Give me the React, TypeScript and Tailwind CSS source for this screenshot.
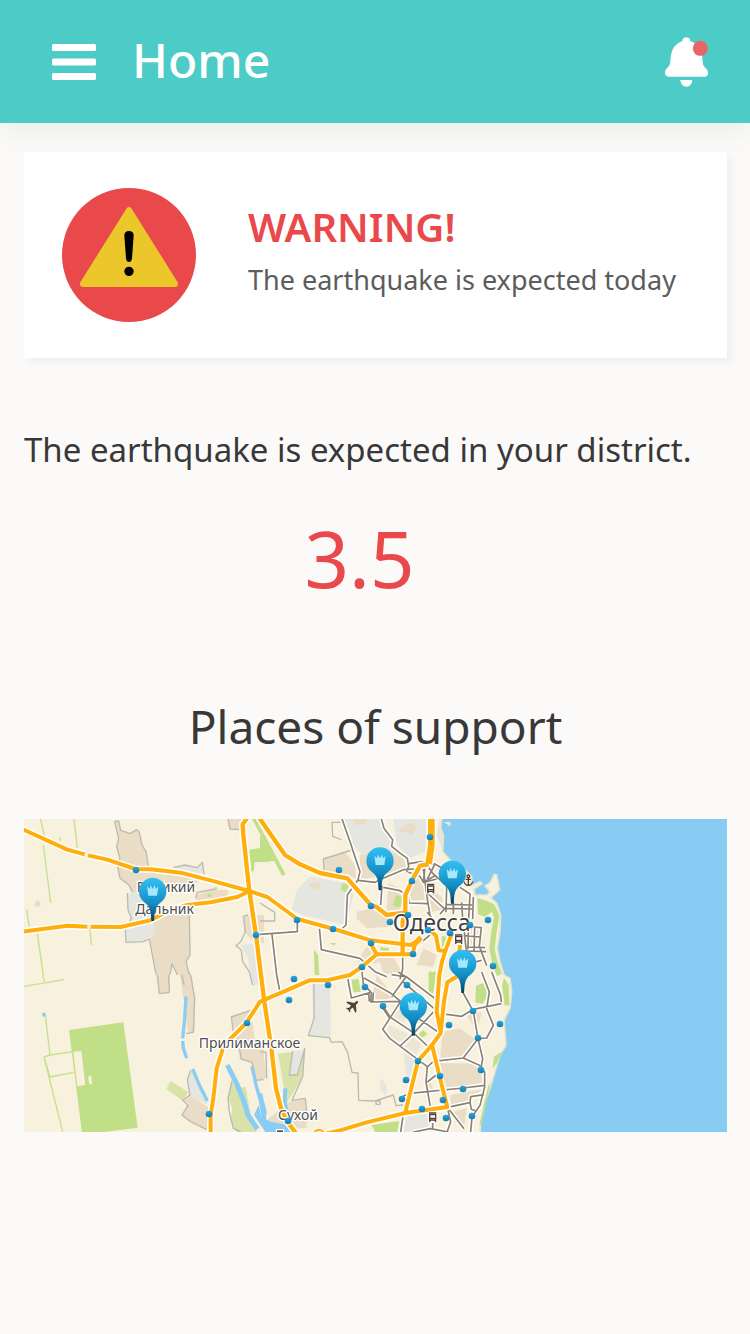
type Tile = "nw" | "sw" | "n" | "s" | "ne" | "cityN" | "cityS";
type Shape = { t: Tile; d: string; c?: string; w?: number };

// Map units are thirds of a pixel; every tile has its own local origin.
const tileOrigin: Record<Tile, [number, number]> = {
  nw: [0, 0],
  sw: [0, 480],
  n: [708, 0],
  s: [708, 480],
  ne: [1128, 0],
  cityN: [948, 12],
  cityS: [948, 471],
};

const SAND = "#eaddc5";
const GREY = "#e6e6e0";
const GREEN = "#c1df87";
const OLIVE = "#d9e3a8";
const WATER = "#89cdf4";
const PALE = "#f7f1de";

const areas: Shape[] = [
  { t: "nw", c: SAND, d: "M274 16 L284 18 L290 46 L318 56 L338 44 L346 52 L354 90 L366 110 L374 156 L420 170 L420 215 L410 240 L325 240 L315 210 L288 190 L280 150 L288 130 L278 95 L284 70Z" },
  { t: "nw", c: GREY, d: "M310 235 L345 230 L388 310 L394 352 L358 380 L306 382 L304 345 L322 310 L312 285Z" },
  { t: "nw", c: SAND, d: "M385 312 L430 290 L496 300 L498 420 L486 440 L496 480 L460 480 L444 446 L438 480 L396 480 L376 372 L394 352Z" },
  { t: "nw", c: SAND, d: "M396 470 L438 470 L438 532 L406 536Z M466 470 L500 470 L512 540 L512 650 L492 656 L480 560Z" },
  { t: "nw", c: SAND, d: "M418 180 L470 178 L530 195 L500 215 L430 215Z M515 240 L560 225 L612 225 L610 245 L520 262Z M612 12 L660 12 L650 44 L618 42Z M660 304 L720 300 L720 385 L690 380 L660 350Z" },
  { t: "nw", c: GREEN, d: "M550 236 L562 236 L562 246 L550 246Z M570 216 L582 218 L578 224Z" },
  { t: "nw", c: GREY, d: "M450 158 L482 150 L520 158 L535 142 L538 175 L480 170Z M650 390 L690 385 L705 480 L710 510 L686 510 L672 430Z" },
  { t: "nw", c: GREEN, d: "M676 104 L740 94 L752 122 L738 140 L692 142 L690 168 L682 170Z" },
  { t: "nw", c: SAND, d: "M30 268 L40 256 L50 262 L48 274 L36 276Z" },
  { t: "nw", c: GREEN, d: "M684 12 L696 12 L785 178 L774 182Z" },
  { t: "sw", c: GREEN, d: "M135 165 L298 142 L341 458 L210 475 L174 475Z" },
  { t: "sw", c: PALE, d: "M148 230 L172 228 L184 330 L160 334Z M192 304 L202 304 L205 328 L196 328Z" },
  { t: "sw", c: SAND, d: "M622 124 L680 106 L692 190 L720 200 L720 316 L696 316 L684 262 L648 254 L640 210Z" },
  { t: "sw", c: OLIVE, d: "M440 318 L494 352 L474 376 L427 342Z" },
  { t: "sw", c: GREY, d: "M500 286 L552 372 L548 388 L496 362 L490 320Z" },
  { t: "sw", c: SAND, d: "M496 360 L552 396 L552 466 L500 440 L474 420 L492 385 L476 375Z" },
  { t: "sw", c: OLIVE, d: "M624 318 L640 340 L665 335 L680 420 L700 475 L640 475 L620 440 L625 400 L612 370Z" },
  { t: "n", c: GREY, d: "M248 12 L370 12 L385 60 L400 105 L425 125 L300 115 L265 70Z M150 185 L262 205 L280 240 L258 330 L130 300 L95 285 L110 225Z M400 12 L500 12 L496 110 L450 130 L410 90Z M540 12 L560 60 L545 100 L530 60Z" },
  { t: "n", c: SAND, d: "M190 130 L255 112 L285 150 L288 190 L230 175 L192 165Z M300 120 L370 98 L430 130 L440 165 L300 195Z M412 50 L450 22 L472 35 L455 64 L440 50Z M145 212 L162 200 L185 210 L175 226Z M290 290 L340 280 L395 310 L385 335 L320 340 L290 310Z M275 12 L315 12 L320 28 L285 30Z" },
  { t: "n", c: SAND, d: "M385 205 L430 225 L420 285 L380 290Z M455 170 L488 180 L495 255 L450 255Z M500 210 L548 250 L545 285 L515 290Z M290 440 L320 395 L380 410 L395 435 L345 445Z M360 440 L400 425 L425 470 L370 478Z M630 340 L665 340 L670 400 L630 400Z M490 400 L530 420 L520 455 L470 450Z" },
  { t: "n", c: GREEN, d: "M0 60 L30 110 L45 138 L0 138Z M248 204 L266 210 L258 232 L240 224Z M408 240 L428 246 L422 276 L398 272Z M162 402 L174 420 L178 480 L164 480Z M360 396 L388 400 L384 410 L362 406Z M506 470 L528 470 L520 535 L506 535Z M210 384 L228 384 L222 392Z M545 362 L560 366 L552 400 L546 396Z" },
  { t: "s", c: GREY, d: "M155 20 L210 18 L212 186 L145 182 L162 130Z M98 228 L130 224 L110 300 L90 300Z M362 310 L380 330 L380 360 L360 345Z M430 215 L480 250 L465 340 L440 320Z M445 405 L500 400 L505 470 L430 470Z" },
  { t: "s", c: OLIVE, d: "M54 236 L98 230 L88 300 L112 300 L134 220 L128 305 L80 385Z" },
  { t: "s", c: SAND, d: "M0 230 L10 230 L20 310 L0 316Z M14 440 L90 380 L134 370 L140 435 L140 460 L100 460Z M548 170 L600 160 L655 200 L620 250 L540 255Z M530 265 L655 265 L670 330 L560 345Z M500 290 L520 345 L508 350Z M570 360 L670 342 L625 375 L575 395Z M350 0 L400 60 L380 76 L335 74Z M580 410 L620 400 L612 460 L590 440Z M620 120 L665 112 L650 170Z" },
  { t: "s", c: "#ece7d5", d: "M400 90 L445 115 L425 155 L395 130Z M385 150 L450 180 L425 205 L385 185Z M455 185 L485 205 L470 240 L430 215Z" },
  { t: "s", c: GREEN, d: "M274 14 L296 12 L302 50 L280 52Z M475 178 L490 165 L502 178 L484 190Z M652 30 L680 38 L676 75 L650 85Z M335 450 L418 438 L412 471 L345 471Z" },
];

const seaPath =
  "M125 12 L122 40 L130 60 L128 110 L150 135 L195 165 L215 185 L215 212 L240 200 L246 206 L222 222 L225 240 L262 240 L270 230 L255 212 L270 204 L283 178 L290 180 L299 225 L272 248 L290 265 L302 300 L300 350 L292 400 L300 440 L312 480 L330 490 L335 530 L330 580 L312 615 L318 690 L300 720 L285 770 L270 820 L255 860 L242 920 L240 960 L1000 960 L1000 0 L125 0 Z";

const boundaries: Shape[] = [
  { t: "nw", d: "M325 230 L315 210 L288 190 L280 150 L288 130 L278 95 L284 70 L272 20 L284 18 L290 46 L318 56 L338 44 L346 52 L354 90 L366 110 L374 156 M310 235 L312 285 L322 310 L304 345 L306 382 L358 380 L376 372 L396 478 M448 158 L482 150 L520 158 L535 142 L540 178 M515 250 L520 232 L575 222 M496 300 L498 420 L486 440 L496 480 M438 480 L444 446 L460 480 M612 12 L618 42 L650 44 M672 300 L658 304 L664 350 L650 380 L636 392 L652 405 L656 440 L676 470 L686 510" },
  { t: "sw", d: "M400 0 L406 56 L436 52 L434 0 M474 0 L480 30 M500 0 L512 70 L508 172 L486 176 M680 106 L622 126 L628 170 L642 195 L652 252 L684 262 L696 316 L718 314 M500 286 L490 315 L498 360 L476 375 L492 392 L474 420 L500 440 L548 464 M624 318 L612 370 L616 410 L628 460 L650 470" },
  { t: "n", d: "M250 22 L216 22 L218 64 L244 74 M285 102 L190 132 L192 166 M0 264 L44 292 L44 318 L0 318" },
  { t: "s", d: "M162 20 L162 130 L145 182 L208 188 L214 202 L246 200 L262 230 L276 292 L294 294 L296 376 L345 378 L400 360 L408 392 L430 390 M348 378 H360 V388 H348Z M98 228 L88 300 L112 300 L134 220 L128 305 L96 376 L136 370 L142 438 M0 230 L18 232 L20 310" },
];

const streams: Shape[] = [
  { t: "sw", w: 10, d: "M486 64 L482 130 L476 190 M476 198 L478 220 L488 250 M506 282 L526 330 L550 378" },
  { t: "sw", w: 15, d: "M610 270 L640 330 L660 380 L672 420 L700 462" },
  { t: "sw", w: 10, d: "M684 274 L696 330 L710 380 L720 440" },
  { t: "s", w: 12, d: "M0 355 L14 410 L10 450 M76 340 L74 380 L84 430" },
  { t: "sw", w: 10, d: "M58 114 L62 124" },
];

const greenLines: Shape[] = [
  { t: "nw", w: 4, d: "M50 12 L64 80 M58 90 L80 264 M150 12 L160 100 M106 66 L110 78 M8 284 L16 334 M40 356 L58 480 M198 340 L202 390" },
  { t: "sw", w: 4, d: "M0 34 L120 14 M56 0 L62 20 M64 120 L78 240 L146 230 M60 246 L78 306 L148 292 M60 246 L116 470 M78 240 L60 246" },
];

const streets: Shape[] = [
  { t: "n", w: 5, d: "M246 12 L270 80 L300 170 L294 194 L262 240 L258 330 L245 342 M0 358 L112 350 L112 314 M36 358 L50 480 M178 336 L184 404 L300 430 L345 470 L380 485" },
  { t: "cityN", w: 5, d: "M124 0 L132 28 L158 62 L155 82 L182 104 L202 118 L206 142 L200 160 M54 184 L105 190 L130 178 L190 152 L225 150 M130 205 L180 215 L205 235 L207 252 L262 254 M126 200 L122 258 M206 134 L245 128 L285 135 L315 152 M205 160 L240 172 L250 190 L290 180 M250 150 L262 240 L270 290 M262 140 L280 165 L320 200 L318 280 M255 140 L250 190 L285 170 M285 135 L262 180 M265 225 L312 268 M300 285 L318 265 M282 305 L262 280 M318 256 L396 258 M318 268 L396 270 M360 205 L390 225 L386 300 M400 234 L398 300 M340 250 V285 M365 250 L368 300" },
  { t: "cityN", w: 5, d: "M188 400 V450 L180 480 M220 390 L282 338 M372 330 L378 388 L400 450 M400 324 L424 326 L418 382 L440 440 M370 350 L420 354 M375 384 L435 386 M375 396 L438 398 M385 330 L384 390 M404 326 L402 400 M400 430 L425 424" },
  { t: "cityS", w: 5, d: "M22 12 L34 78 L90 62 M66 0 L70 35 L94 62 L92 90 L180 88 M86 62 L88 88 M100 62 L98 88 M72 18 L150 62 L182 88 L155 130 L128 172 L150 200 L262 284 M130 103 L150 135 L220 182 L262 222 M180 88 L220 125 M180 222 L220 185 L280 120 M225 132 L300 184 M150 140 L130 110 M155 8 L200 15 L285 80 M200 12 L155 74 M190 30 L285 112 M175 0 L210 22" },
  { t: "cityS", w: 5, d: "M282 122 L365 133 L400 112 L484 95 M368 60 L400 118 L414 200 L428 260 L422 295 M425 0 L448 60 L440 110 L460 160 L440 198 L414 200 L370 258 L280 268 L262 285 L258 330 L272 410 M370 258 L418 280 L434 300 V345 L420 400 L396 435 L392 480 M182 376 L210 364 L370 348 L434 340 M322 406 L390 392 L392 374 L432 368 M322 406 L372 470 M390 392 L394 412 L410 418 M322 406 L332 450 L322 478 M220 480 L272 470 L325 480 M278 450 V474 M190 425 L182 480 M455 0 L482 70 L484 90 M262 330 L300 300" },
  { t: "s", w: 5, d: "M50 0 L60 52" },
];

const highways: Shape[] = [
  { t: "nw", w: 12, d: "M-10 40 L130 104 L182 118 M192 121 L250 134 L334 162 L380 163 L470 173 L560 196 L676 228 L730 246 L820 312 L930 342 L1040 376 L1160 390 L1176 380 L1190 366" },
  { t: "nw", w: 12, d: "M-10 351 L130 332 L190 335 M200 335 L290 336 L378 316 L430 290 L490 270 L560 262 L640 246 L676 228" },
  { t: "nw", w: 13, d: "M676 0 L656 28 L658 60 L676 228 L696 360 L720 552 L742 700 L756 820 L770 876 L790 920 L820 960" },
  { t: "n", w: 13, d: "M-4 0 L0 12 L75 120 L120 148 L180 174 L262 190 L332 270 L350 276 L380 300 L410 296 L440 292" },
  { t: "n", w: 20, d: "M514 0 L514 90 L506 146" },
  { t: "n", w: 13, d: "M506 148 L480 152 L456 196 L436 240 L436 290 L428 320 L428 420" },
  { t: "n", w: 12, d: "M332 386 L350 418 L458 418 L464 390 L484 370 M350 418 L305 456 L270 480 L200 496 L148 496 L80 526 L0 560 L-42 625 L-108 690 L-130 760 L-140 850 L-148 900 L-148 960" },
  { t: "n", w: 12, d: "M510 346 L528 362 L536 406 L556 408 L570 370 L576 354 M556 408 L546 440 L538 480 L530 590 L542 650 M600 390 L594 450 M592 484 L562 502 L552 560 L542 654 L516 690 L474 738 L436 892 M516 690 L540 790 L562 876 L436 894 L320 922 L240 946 L180 960" },
];

const dots: [number, number][] = [
  [136, 870], [256, 935], [247, 1023], [209, 1114], [339, 870], [297, 920], [333, 929],
  [371, 906], [390, 922], [371, 943], [413, 954], [362, 967], [412, 881], [430, 837],
  [408, 915], [428, 930], [450, 933], [470, 925], [488, 920], [493, 966], [294, 979],
  [289, 1000], [328, 985], [365, 987], [383, 1006], [407, 985], [473, 1011], [449, 1025],
  [500, 1024], [478, 1038], [418, 1061], [481, 1070], [406, 1080], [440, 1076],
  [463, 1089], [402, 1099], [422, 1109], [443, 1100], [446, 1118], [472, 1116], [288, 1121],
];

const pins: [number, number][] = [
  [386, 318], [1068, 226], [1285, 266], [1316, 534], [1168, 662],
];

const tileShift = (t: Tile) => `translate(${tileOrigin[t][0]} ${tileOrigin[t][1]})`;

function Lines({ items, color, extra = 0 }: { items: Shape[]; color: string; extra?: number }) {
  return (
    <g fill="none" stroke={color} strokeLinejoin="round">
      {items.map((s, i) => (
        <path key={i} d={s.d} strokeWidth={(s.w ?? 4) + extra} transform={tileShift(s.t)} />
      ))}
    </g>
  );
}

function Tram({ x, y }: { x: number; y: number }) {
  return (
    <g transform={`translate(${x} ${y})`} fill="none" stroke="#563f39" strokeWidth="4">
      <rect x="-14" y="-17" width="28" height="34" fill="#fff" stroke="none" />
      <path d="M-11 -13 H11 M-9 -8 H9 V8 H-9 Z M-9 3 H9 M-6 8 L-10 14 M6 8 L10 14" />
    </g>
  );
}

function SupportMap() {
  return (
    <svg
      viewBox="0 12 2109 939"
      className="block h-auto w-full"
      role="img"
      aria-label="Places of support"
    >
      <defs>
        <linearGradient id="pin" x1="0" y1="0" x2="0" y2="1">
          <stop offset="0" stopColor="#32c0f2" />
          <stop offset="0.6" stopColor="#138cc4" />
          <stop offset="1" stopColor="#073c5e" />
        </linearGradient>
        <linearGradient id="dot" x1="0" y1="0" x2="0" y2="1">
          <stop offset="0" stopColor="#2aa8dc" />
          <stop offset="1" stopColor="#1579b0" />
        </linearGradient>
      </defs>
      <rect y="12" width="2109" height="939" fill={PALE} />
      {areas.map((s, i) => (
        <path key={i} d={s.d} fill={s.c} transform={tileShift(s.t)} />
      ))}
      <Lines items={greenLines} color="#c5e08c" />
      <Lines items={boundaries} color="#bdb9b3" />
      <g transform={tileShift("ne")}>
        <path d={seaPath} fill="#88ccf3" stroke="#e6e6cf" strokeWidth="5" />
        <path d="M130 22 L150 20 L154 28 L146 34 L142 28Z" fill="#e6e6dc" />
        <path
          d="M250 262 L278 276 L290 304 L282 350 L276 400 L284 440 L298 480"
          fill="none"
          stroke={GREEN}
          strokeWidth="16"
        />
        <path d="M232 248 L280 266 L276 290 L255 305 L234 298Z" fill={GREEN} />
        <path
          d="M312 488 L326 510 L328 570 L314 572 L306 510Z M228 512 L250 504 L262 540 L248 566 L226 562Z M282 725 L306 710 L290 745 L278 760Z M264 815 L272 800 L262 850 L244 930 L238 930Z"
          fill={GREEN}
        />
      </g>
      <path d="M690 900 L704 870 L712 905 L740 920 L790 930 L806 951 L724 951Z" fill={WATER} />
      <Lines items={streams} color={WATER} />

      <Lines items={streets} color="#ffffff" extra={9} />
      <Lines items={streets} color="#8b8272" />
      <Lines items={highways} color="#ffffff" extra={9} />
      <Lines items={highways} color="#ffae0b" />
      <path d="M872 951 A14 10 0 0 1 898 951" fill="none" stroke="#ffae0b" strokeWidth="6" />

      <Tram x={1220} y={221} />
      <Tram x={1304} y={373} />
      <Tram x={1226} y={907} />
      <g transform="translate(1333 195)" fill="none" stroke="#563f39" strokeWidth="4">
        <circle cy="-11" r="4" />
        <path d="M0 -7 V16 M-8 -2 H8 M-13 5 Q-10 16 0 16 Q10 16 13 5" />
      </g>
      <path
        transform="translate(987 572) rotate(48)"
        d="M0 -20 Q4 -20 4 -8 L20 4 V9 L4 4 L3 14 L8 18 V21 L0 19 L-8 21 V18 L-3 14 L-4 4 L-20 9 V4 L-4 -8 Q-4 -20 0 -20Z"
        fill="#563f39"
      />

      <g
        fill="#505050"
        stroke="#ffffff"
        strokeWidth="8"
        strokeLinejoin="round"
        paintOrder="stroke"
        fontFamily="'Noto Sans', 'Open Sans', sans-serif"
        fontSize="42"
      >
        <text x="338" y="232">Великий</text>
        <text x="334" y="297">Дальник</text>
        <text x="524" y="699">Прилиманское</text>
        <text x="762" y="915">Сухой</text>
        <rect x="759" y="946" width="18" height="5" />
        <text x="1106" y="348" fontSize="68" fill="#3f3f3f">Одесса</text>
      </g>

      {dots.map(([x, y], i) => (
        <circle key={i} cx={(x - 24) * 3} cy={(y - 815) * 3} r="10" fill="url(#dot)" />
      ))}
      {pins.map(([x, y], i) => (
        <g key={i} transform={`translate(${x} ${y})`}>
          <path
            d="M-4 0 L-6 -25 Q-9 -46 -25 -56 A41 41 0 1 1 25 -56 Q9 -46 6 -25 L4 0Z"
            fill="url(#pin)"
          />
          <path d="M-17 -104 L-9 -96 L-6 -108 L0 -96 L6 -108 L9 -96 L17 -104 L13 -76 H-13Z" fill="#a4e8fd" />
        </g>
      ))}
    </svg>
  );
}

function MenuIcon() {
  return (
    <svg viewBox="0 0 44 36" className="h-9 w-11" fill="#fff" aria-hidden="true">
      <rect width="44" height="7" rx="1.5" />
      <rect y="14.5" width="44" height="7" rx="1.5" />
      <rect y="29" width="44" height="7" rx="1.5" />
    </svg>
  );
}

function BellIcon() {
  return (
    <svg viewBox="0 0 129 150" className="h-[50px] w-[43px]" aria-hidden="true">
      <path
        d="M52 12 C52 -3 76 -3 76 12 C104 22 112 45 113 75 C114 95 129 92 129 108 C129 114 126 119 120 119 H9 C4 119 0 114 0 108 C0 92 15 92 16 75 C17 45 24 23 52 12Z"
        fill="#fff"
      />
      <path d="M46 129 H82 C80 143 73 149 64 149 C55 149 48 143 46 129Z" fill="#fff" />
      <circle cx="106" cy="34" r="22.5" fill="#e76566" />
    </svg>
  );
}

function WarningIcon() {
  return (
    <svg viewBox="0 0 402 402" className="size-[134px] shrink-0" aria-hidden="true">
      <circle cx="201" cy="201" r="201" fill="#e9494b" />
      <path d="M193 62 Q201 51 209 62 L347 283 Q351 296 338 297 H64 Q51 296 55 283Z" fill="#ecc72b" />
      <path d="M187 143 Q187 129 201 129 Q215 129 215 143 L210 211 Q209 222 201 222 Q193 222 192 211Z" />
      <circle cx="201" cy="250" r="14" />
    </svg>
  );
}

export default function App() {
  return (
    <div className="min-h-screen bg-[#fbfaf9] pb-12 font-['Noto_Sans','Open_Sans',sans-serif] text-[#383838]">
      <header className="flex h-[123px] items-center bg-[#4ccbc7] pt-px pr-[42px] pl-[52px] shadow-[0_8px_24px_rgba(60,90,90,0.08)]">
        <button type="button" aria-label="Open menu">
          <MenuIcon />
        </button>
        <h1 className="ml-9 pb-1 text-5xl font-medium text-white">Home</h1>
        <button type="button" aria-label="Notifications" className="ml-auto">
          <BellIcon />
        </button>
      </header>

      <main className="pt-[29px] pr-[23px] pl-6">
        <section className="flex items-center gap-[52px] bg-white py-9 pl-[38px] shadow-[4px_4px_8px_rgba(0,0,0,0.05)]">
          <WarningIcon />
          <div className="pb-1">
            <h2 className="text-[40px] leading-[54px] font-semibold text-[#e9494b]">WARNING!</h2>
            <p className="text-[27px] leading-[52px] whitespace-nowrap text-[#5c5c5c]">
              The earthquake is expected today
            </p>
          </div>
        </section>

        <p className="mt-[72px] text-[33px] leading-10 whitespace-nowrap">
          The earthquake is expected in your district.
        </p>
        <p className="mt-12 pr-8 text-center text-[78px] leading-20 text-[#e9494b]">3.5</p>
        <h2 className="mt-[100px] text-center text-[46px] leading-14">Places of support</h2>
        <div className="mt-[65px]">
          <SupportMap />
        </div>
      </main>
    </div>
  );
}
